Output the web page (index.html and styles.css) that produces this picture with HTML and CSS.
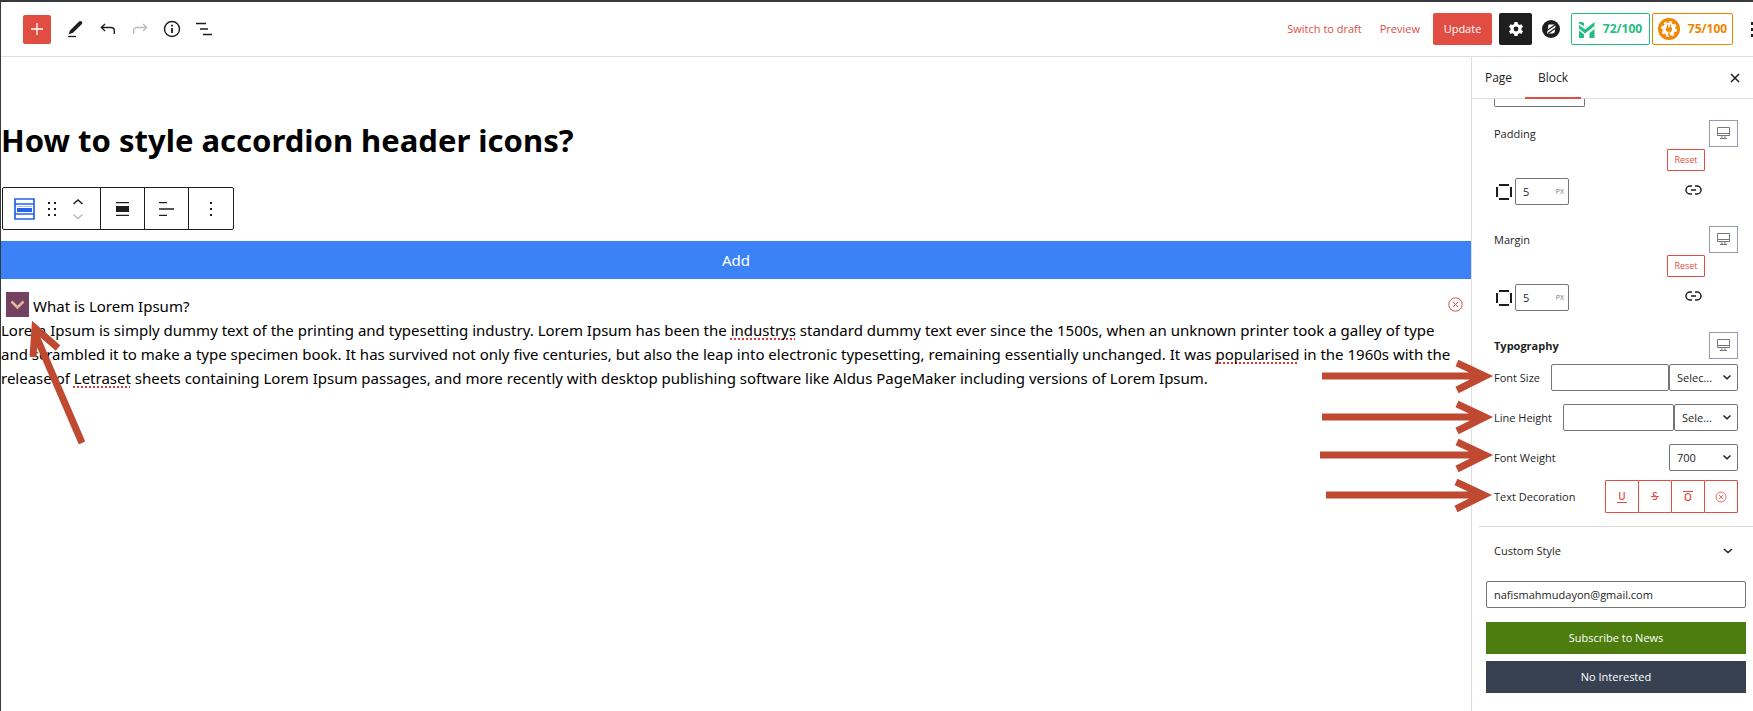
FILE: index.html
```html
<!DOCTYPE html>
<html lang="en">
<head>
<meta charset="utf-8">
<title>Edit Page</title>
<link rel="stylesheet" href="styles.css">
</head>
<body>
<div class="app">
  <header class="topbar">
    <div class="tools">
      <button class="add-block" aria-label="Add block"><svg width="12" height="12" viewBox="0 0 12 12"><path d="M6 0v12M0 6h12" stroke="#fff" stroke-width="1.3"/></svg></button>
      <button class="tool" aria-label="Tools"><svg width="18" height="20" viewBox="0 0 18 20"><path d="M3 11.500 12 2.500q1.300-1.200 2.700 0t0 2.800l-9 8.800-4.200 1.200z" fill="#1e1e1e"/><path d="M1 17.500h8" stroke="#1e1e1e" stroke-width="1.300"/></svg></button>
      <button class="tool" aria-label="Undo"><svg width="16" height="14" viewBox="0 0 16 14" fill="none" stroke="#1e1e1e" stroke-width="1.400"><path d="M5 2 1.300 5.500 5 9M1.500 5.500H11q3.300 0 3.300 3V12"/></svg></button>
      <button class="tool" aria-label="Redo"><svg width="16" height="14" viewBox="0 0 16 14" fill="none" stroke="#bbb" stroke-width="1.400"><path d="M11 2l3.700 3.500L11 9M14.500 5.500H5q-3.300 0-3.300 3V12"/></svg></button>
      <button class="tool" aria-label="Details"><svg width="18" height="18" viewBox="0 0 18 18"><circle cx="9" cy="9" r="7.500" fill="none" stroke="#1e1e1e" stroke-width="1.400"/><path d="M9 8v5M9 4.800v1.800" stroke="#1e1e1e" stroke-width="1.800"/></svg></button>
      <button class="tool" aria-label="List view"><svg width="18" height="16" viewBox="0 0 18 16"><path d="M1 2.500h10M5 8h8M8 13.500h9" stroke="#1e1e1e" stroke-width="1.400"/></svg></button>
    </div>
    <div class="actions">
      <button class="link-btn">Switch to draft</button>
      <button class="link-btn">Preview</button>
      <button class="update">Update</button>
      <button class="gear" aria-label="Settings"><svg width="16" height="16" viewBox="0 0 16 16"><path d="M6.500 1h3l.5 2 1.500.9 2-.7 1.500 2.600-1.500 1.400v1.700l1.500 1.400-1.500 2.600-2-.7-1.500.9-.5 2h-3l-.5-2-1.500-.9-2 .7L1 10.300l1.500-1.400V7.200L1 5.800l1.500-2.600 2 .7L6 3z" fill="#fff"/><circle cx="8" cy="8" r="2.400" fill="#1e1e1e"/></svg></button>
      <button class="brand" aria-label="Blocks"><svg width="18" height="18" viewBox="0 0 18 18"><circle cx="9" cy="9" r="9" fill="#1e1e1e"/><path d="M6.500 4.500h5q2 0 2 2 0 1.500-1.500 2.200 1 .6 1 1.800 0 3-3 3H5z" fill="#fff"/><path d="M5 10.500l8-5.500M6 13.500l6.500-4.700" stroke="#1e1e1e" stroke-width="1.200"/></svg></button>
      <button class="score score-green"><svg width="16" height="17" viewBox="0 0 16 17" fill="#20bf7f"><path d="M0 1h3.500L5 2.200V5L0 2.500zM0 4l6 4.500L15.500 1v4L6 12.500l-6-5zM0 9.500l5 4V17H0zM10.500 12l5-4v9h-5z"/></svg>72/100</button>
      <button class="score score-orange"><svg width="22" height="22" viewBox="0 0 22 22"><circle cx="11" cy="11" r="11" fill="#f18500"/><circle cx="11" cy="11" r="7.200" fill="none" stroke="#fff" stroke-width="1.600" stroke-dasharray="3 2.650"/><circle cx="11" cy="11" r="6.500" fill="#fff"/><path d="M8 9.500h6v2q0 2.500-3 2.500t-3-2.500zM9 6.500h1.200V10H9zM11.800 6.500H13V10h-1.200zM10.300 13h1.400v5h-1.400z" fill="#f18500"/></svg>75/100</button>
      <button class="more" aria-label="Options"><svg width="4" height="16" viewBox="0 0 4 16"><path d="M1 1h3v3H1zM1 7h3v3H1zM1 13h3v3H1z" fill="#1e1e1e"/></svg></button>
    </div>
  </header>
  <div class="workspace">
    <main class="canvas">
      <h1 class="title">How to style accordion header icons?</h1>
      <div class="block-toolbar">
        <div class="group group-main">
          <button aria-label="Accordion"><svg width="21" height="22" viewBox="0 0 21 22"><path d="M1 1h19v20H1zM1 6h19M1 16h19" fill="none" stroke="#2563eb" stroke-width="1.700"/><path d="M3 10h15v4H3z" fill="#2563eb"/><path d="M3 8.500h15" stroke="#a8c1f7"/></svg></button>
          <button aria-label="Drag"><svg width="8" height="14" viewBox="0 0 8 14" fill="#1e1e1e"><path d="M0 0h2v2H0zM6 0h2v2H6zM0 6h2v2H0zM6 6h2v2H6zM0 12h2v2H0zM6 12h2v2H6z"/></svg></button>
          <button aria-label="Move"><svg width="12" height="22" viewBox="0 0 12 22" fill="none" stroke-width="1.500"><path d="M1.500 6 6 2l4.500 4" stroke="#1e1e1e"/><path d="M1.500 16.500l4.500 4 4.500-4" stroke="#bbb"/></svg></button>
        </div>
        <div class="group"><button aria-label="Align"><svg width="13" height="14" viewBox="0 0 13 14"><path d="M0 .7h13M0 13.300h13" stroke="#1e1e1e" stroke-width="1.300"/><path d="M0 4h13v6H0z" fill="#1e1e1e"/></svg></button></div>
        <div class="group"><button aria-label="Align text"><svg width="15" height="14" viewBox="0 0 15 14"><path d="M0 .7h8M0 7h15M0 13.300h8" stroke="#1e1e1e" stroke-width="1.300"/></svg></button></div>
        <div class="group"><button aria-label="Options"><svg width="2" height="14" viewBox="0 0 2 14"><path d="M0 0h2v2H0zM0 6h2v2H0zM0 12h2v2H0z" fill="#1e1e1e"/></svg></button></div>
      </div>
      <button class="add-item">Add</button>
      <section class="accordion">
        <div class="accordion-head">
          <button class="toggle" aria-label="Toggle"><svg width="15" height="10" viewBox="0 0 15 10"><path d="M1.500 1.500l6 6 6-6" fill="none" stroke="#e2b89c" stroke-width="2.500"/></svg></button>
          <span class="question">What is Lorem Ipsum?</span>
          <button class="remove" aria-label="Remove"><svg width="15" height="15" viewBox="0 0 15 15" fill="none" stroke="#e14d43"><circle cx="7.500" cy="7.500" r="6.700"/><path d="M5 5l5 5M10 5l-5 5"/></svg></button>
        </div>
        <p class="answer">Lorem Ipsum is simply dummy text of the printing and typesetting industry. Lorem Ipsum has been the <span class="misspelt">industrys</span> standard dummy text ever since the 1500s, when an unknown printer took a galley of type and scrambled it to make a type specimen book. It has survived not only five centuries, but also the leap into electronic typesetting, remaining essentially unchanged. It was <span class="misspelt">popularised</span> in the 1960s with the release of <span class="misspelt">Letraset</span> sheets containing Lorem Ipsum passages, and more recently with desktop publishing software like Aldus PageMaker including versions of Lorem Ipsum.</p>
      </section>
    </main>
    <aside class="sidebar">
      <nav class="tabs">
        <button class="tab">Page</button>
        <button class="tab tab-active">Block</button>
        <button class="close" aria-label="Close"><svg width="10" height="10" viewBox="0 0 10 10"><path d="M1 1l8 8M9 1L1 9" stroke="#1e1e1e" stroke-width="1.500"/></svg></button>
      </nav>
      <div class="settings">
        <input class="field stub" aria-label="Width">
        <div class="spacing">
          <div class="row-head"><label for="pad">Padding</label><button class="device" aria-label="Device"><svg width="13" height="12" viewBox="0 0 13 12" fill="none" stroke="#777"><path d="M.5.500h12v8H.5zM.5 6.500h12M5 8.500v3M8 8.500v3M3 11.500h7"/></svg></button></div>
          <button class="reset">Reset</button>
          <div class="unit-row"><svg width="16" height="16" viewBox="0 0 16 16"><path d="M3 1h10M3 15h10M1 3v10M15 3v10" stroke="#1e1e1e" stroke-width="2"/></svg><span class="unit"><input id="pad" class="field" value="5"><span class="px">PX</span></span><button class="linked" aria-label="Link sides"><svg width="17" height="10" viewBox="0 0 17 10" fill="none" stroke="#1e1e1e" stroke-width="1.500"><path d="M7 1H5a4 4 0 000 8h2M10 1h2a4 4 0 010 8h-2M6 5h5"/></svg></button></div>
        </div>
        <div class="spacing">
          <div class="row-head"><label for="mar">Margin</label><button class="device" aria-label="Device"><svg width="13" height="12" viewBox="0 0 13 12" fill="none" stroke="#777"><path d="M.5.500h12v8H.5zM.5 6.500h12M5 8.500v3M8 8.500v3M3 11.500h7"/></svg></button></div>
          <button class="reset">Reset</button>
          <div class="unit-row"><svg width="16" height="16" viewBox="0 0 16 16"><path d="M3 1h10M3 15h10M1 3v10M15 3v10" stroke="#1e1e1e" stroke-width="2"/></svg><span class="unit"><input id="mar" class="field" value="5"><span class="px">PX</span></span><button class="linked" aria-label="Link sides"><svg width="17" height="10" viewBox="0 0 17 10" fill="none" stroke="#1e1e1e" stroke-width="1.500"><path d="M7 1H5a4 4 0 000 8h2M10 1h2a4 4 0 010 8h-2M6 5h5"/></svg></button></div>
        </div>
        <div class="row-head"><strong>Typography</strong><button class="device" aria-label="Device"><svg width="13" height="12" viewBox="0 0 13 12" fill="none" stroke="#777"><path d="M.5.500h12v8H.5zM.5 6.500h12M5 8.500v3M8 8.500v3M3 11.500h7"/></svg></button></div>
        <div class="type-row"><label for="size">Font Size</label><input id="size" class="field grow"><select class="field pick" aria-label="Font size unit"><option>Selec...</option></select></div>
        <div class="type-row"><label for="lh">Line Height</label><input id="lh" class="field grow"><select class="field pick pick-small" aria-label="Line height unit"><option>Sele...</option></select></div>
        <div class="type-row"><label for="weight">Font Weight</label><select id="weight" class="field pick"><option>700</option></select></div>
        <div class="type-row deco-row"><span>Text Decoration</span><div class="deco">
          <button aria-label="Underline"><span class="u">U</span></button>
          <button aria-label="Line through"><span class="s">S</span></button>
          <button aria-label="Overline"><span class="o">O</span></button>
          <button aria-label="None"><svg width="12" height="12" viewBox="0 0 12 12" fill="none" stroke="#e14d43" stroke-width=".8"><circle cx="6" cy="6" r="5"/><path d="M4 4l4 4M8 4L4 8"/></svg></button>
        </div></div>
      </div>
      <button class="panel-toggle">Custom Style<svg width="10" height="6" viewBox="0 0 10 6"><path d="M1 1l4 3.500L9 1" fill="none" stroke="#1e1e1e" stroke-width="1.500"/></svg></button>
      <form class="news">
        <input class="field email" aria-label="Email" value="nafismahmudayon@gmail.com">
        <button type="button" class="subscribe">Subscribe to News</button>
        <button type="button" class="decline">No Interested</button>
      </form>
    </aside>
  </div>
  <span class="edge-mark edge-one"></span><span class="edge-mark edge-two"></span>
  <svg class="arrow-left" width="70" height="135" viewBox="0 0 70 135"><path d="M62 134 16 27" stroke="#bf4a31" stroke-width="7"/><path d="M13 48l2-29 23 20" fill="none" stroke="#bf4a31" stroke-width="7"/></svg>
  <svg class="arrows-right" width="180" height="170" viewBox="0 0 180 170" fill="none" stroke="#bf4a31" stroke-width="7"><path d="M7 28h160M142 15l28 13-28 14M7 69h160M142 56l28 13-28 14M5 107h160M142 94l28 13-28 14M11 147h154M141 134l28 13-28 14"/></svg>
</div>
</body>
</html>
```
FILE: styles.css
```css
* { box-sizing: border-box; }
body { margin: 0; background: #fff; color: #1e1e1e; font: 11px/16px "Open Sans", "Noto Sans", sans-serif; }
button, input, select { font: inherit; color: inherit; margin: 0; }
button { padding: 0; border: 0; background: none; display: flex; align-items: center; justify-content: center; flex: none; }
svg { display: block; flex: none; }
.app { position: relative; min-height: 100vh; overflow: hidden; border-top: 2px solid #36393e; border-left: 1px solid #36393e; display: flex; flex-direction: column; }
.topbar { height: 55px; border-bottom: 1px solid #ddd; display: flex; justify-content: space-between; align-items: center; padding-left: 22px; }
.tools { display: flex; align-items: center; gap: 8px; }
.add-block { width: 28px; height: 29px; background: #e14d43; border-radius: 2px; margin-right: 5px; }
.tool { width: 24px; height: 24px; }
.actions { display: flex; align-items: center; }
.link-btn { color: #e14d43; margin-right: 18px; }
.update { width: 59px; height: 32px; background: #e14d43; color: #fff; border-radius: 2px; margin: 0 7px 0 -5px; }
.gear { width: 33px; height: 32px; background: #1e1e1e; border-radius: 2px; }
.brand { margin: 0 11px 0 10px; }
.score { height: 32px; border: 1px solid; border-radius: 2px; background: #fff; font-size: 12px; font-weight: 700; margin-right: 2px; }
.score-green { width: 79px; gap: 8px; color: #20bf7f; }
.score-orange { width: 81px; gap: 8px; color: #f18500; }
.more { width: 4px; margin-left: 15px; margin-right: -1px; }
.workspace { flex: 1; display: flex; }
.canvas { flex: 1; min-width: 0; color: #000; font-family: "Noto Sans", sans-serif; }
.title { margin: 61px 0 0; font-size: 31px; line-height: 44px; font-weight: 700; }
.block-toolbar { display: inline-flex; margin: 25px 0 0 1px; height: 43px; border: 1px solid #1e1e1e; border-radius: 2px; }
.group { width: 44px; display: flex; align-items: center; justify-content: center; border-right: 1px solid #1e1e1e; }
.group:last-child { border-right: 0; }
.group-main { width: 98px; gap: 13px; padding-right: 6px; }
.group-main button:last-child { margin-left: 3px; }
.add-item { width: 100%; height: 38px; margin-top: 11px; background: #3b82f6; color: #fff; font-size: 15px; }
.accordion { padding-top: 12px; }
.accordion-head { display: flex; align-items: center; height: 27px; padding-left: 5px; }
.toggle { width: 23px; height: 25px; background: #744161; margin-right: 4px; }
.question, .answer { font-size: 15px; line-height: 24px; }
.question { padding-top: 2px; }
.remove { margin: 0 8px 0 auto; }
.answer { margin: 0; padding-right: 8px; }
.misspelt { text-decoration: underline dotted #e33 2px; text-underline-offset: 2px; text-decoration-skip-ink: none; }
.sidebar { width: 282px; border-left: 1px solid #ddd; }
.tabs { height: 42px; display: flex; border-bottom: 1px solid #ddd; padding-right: 13px; }
.tab { width: 53px; color: #1e1e1e; font-size: 12px; }
.tab-active { width: 56px; border-bottom: 2px solid #e14d43; border-top: 2px solid transparent; margin-bottom: -1px; }
.close { margin-left: auto; }
.settings { padding: 0 15px 13px; border-bottom: 1px solid #ddd; margin-left: 7px; }
.field { height: 27px; border: 1px solid #757575; border-radius: 2px; background: #fff; padding: 0 7px; min-width: 0; }
.stub { display: block; width: 91px; height: 8px; border-top: 0; border-radius: 0 0 2px 2px; }
.row-head { display: flex; justify-content: space-between; align-items: center; }
.stub + .spacing { margin-top: 13px; }
.device { width: 29px; height: 27px; border: 1px solid #949bad; padding-bottom: 2px; }
.reset { width: 38px; height: 22px; border: 1px solid #e14d43; border-radius: 1px; color: #e14d43; font-size: 9px; margin: 2px 33px 7px auto; }
.unit-row { display: flex; align-items: center; padding-left: 2px; }
.spacing { margin-bottom: 21px; }
.unit { position: relative; width: 54px; margin-left: 3px; }
.unit .field { width: 100%; display: block; }
.px { position: absolute; right: 5px; top: 6px; font-size: 7px; color: #757575; }
.linked { margin: 0 36px 4px auto; }
.type-row { display: flex; align-items: center; margin-top: 13px; }
.row-head + .type-row { margin-top: 5px; }
.grow { flex: 1; margin-left: 11px; }
.pick { width: 69px; margin-left: auto; appearance: none; background: #fff url("data:image/svg+xml,%3Csvg xmlns='http://www.w3.org/2000/svg' width='8' height='5'%3E%3Cpath d='M.5.500 4 3.800 7.500.500' fill='none' stroke='%231e1e1e' stroke-width='1.400'/%3E%3C/svg%3E") no-repeat right 6px center; }
.grow + .pick { margin-left: 0; }
.pick-small { width: 64px; }
.deco-row { margin-top: 9px; justify-content: space-between; }
.deco { display: flex; }
.deco button { width: 34px; height: 33px; border: 1px solid #e14d43; border-radius: 1px; color: #e14d43; font-size: 10px; font-weight: 600; line-height: 11px; }
.deco button + button { margin-left: -1px; }
.deco span { padding: 0 1px; }
.u { border-bottom: 1px solid; }
.s { background: linear-gradient(#e14d43, #e14d43) center / 100% 1px no-repeat; }
.o { border-top: 1px solid; }
.panel-toggle { width: 100%; height: 47px; justify-content: space-between; padding: 0 20px 0 22px; }
.news { display: grid; gap: 7px; padding: 7px 7px 0 14px; }
.email { width: 100%; margin-bottom: 7px; }
.subscribe, .decline { height: 32px; color: #fff; background: #4d7c0f; }
.decline { background: #374151; }
.edge-mark { position: absolute; left: -1px; width: 1px; height: 9px; background: #e14d43; }
.edge-one { top: 174px; }
.edge-two { top: 196px; }
.arrow-left { position: absolute; left: 19px; top: 307px; }
.arrows-right { position: absolute; right: 258px; top: 346px; }
```
